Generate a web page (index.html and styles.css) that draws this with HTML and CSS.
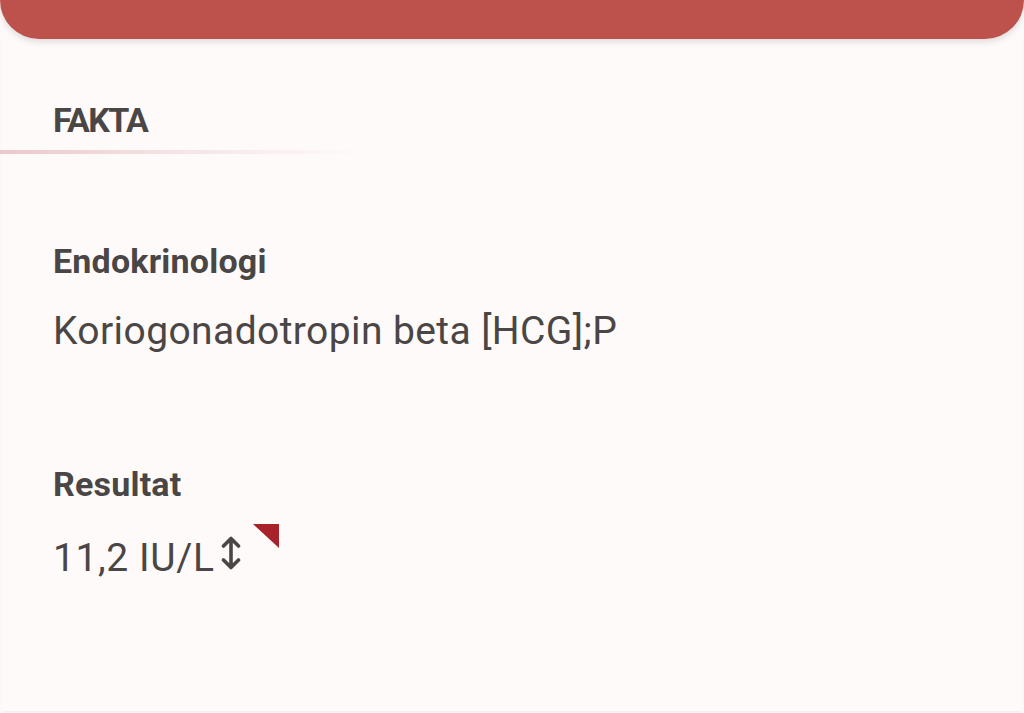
FILE: index.html
```html
<!DOCTYPE html>
<html lang="da">
<head>
<meta charset="utf-8">
<title>Fakta</title>
<link rel="stylesheet" href="styles.css">
</head>
<body>
<div class="page">
  <header class="topbar"></header>
  <section class="card">
    <h2 class="section-title">FAKTA</h2>
    <div class="divider"></div>
    <div class="field">
      <div class="label">Endokrinologi</div>
      <div class="value">Koriogonadotropin beta [HCG];P</div>
    </div>
    <div class="field field-result">
      <div class="label">Resultat</div>
      <div class="value result">
        <span>11,2 IU/L</span>
        <svg class="updown" width="22" height="34" viewBox="0 0 22 34" aria-hidden="true">
          <path d="M11 3 V31 M3.5 10 L11 2.5 L18.5 10 M3.5 24 L11 31.5 L18.5 24" fill="none" stroke="#4a4645" stroke-width="3.6" stroke-linecap="round" stroke-linejoin="round"/>
        </svg>
        <span class="flag"></span>
      </div>
    </div>
  </section>
</div>
</body>
</html>
```

FILE: styles.css
```css
html, body {
  margin: 0;
  padding: 0;
  background: #fefaf9;
}
body {
  font-family: Roboto, "Open Sans", sans-serif;
  color: #4a4645;
  height: 713px;
  overflow: hidden;
}
.page {
  display: flex;
  flex-direction: column;
  height: 713px;
}
.topbar {
  height: 39px;
  background: #bd514b;
  border-radius: 0 0 46px 46px;
  box-shadow: 0 3px 6px rgba(0, 0, 0, 0.12);
  flex: none;
  position: relative;
  z-index: 1;
}
.card {
  flex: 1;
  margin: 0 2px 2px;
  background: #fefaf9;
  box-shadow: 0 1px 2px rgba(0, 0, 0, 0.06);
  padding-top: 61px;
}
.section-title {
  margin: 0 0 0 51px;
  font-size: 34px;
  font-weight: 700;
  line-height: 40px;
  letter-spacing: -1.6px;
  color: #4a4645;
}
.divider {
  margin-top: 10px;
  margin-left: -2px;
  width: 360px;
  height: 4px;
  background: linear-gradient(to right, #eac8cb 0%, #f4e2e3 45%, rgba(254, 250, 249, 0) 100%);
}
.field {
  padding-left: 51px;
  margin-top: 87px;
}
.field-result {
  margin-top: 110px;
}
.label {
  font-size: 34px;
  font-weight: 700;
  line-height: 40px;
  letter-spacing: 0.2px;
}
.value {
  margin-top: 27px;
  font-size: 39px;
  line-height: 46px;
  letter-spacing: 0.4px;
}
.result {
  display: flex;
  align-items: flex-start;
  margin-top: 31px;
  letter-spacing: 0.6px;
}
.updown {
  margin-left: 5px;
  margin-top: 1px;
}
.flag {
  width: 0;
  height: 0;
  border-top: 24px solid #a8222a;
  border-left: 26px solid transparent;
  margin-left: 11px;
  margin-top: -11px;
}
```
